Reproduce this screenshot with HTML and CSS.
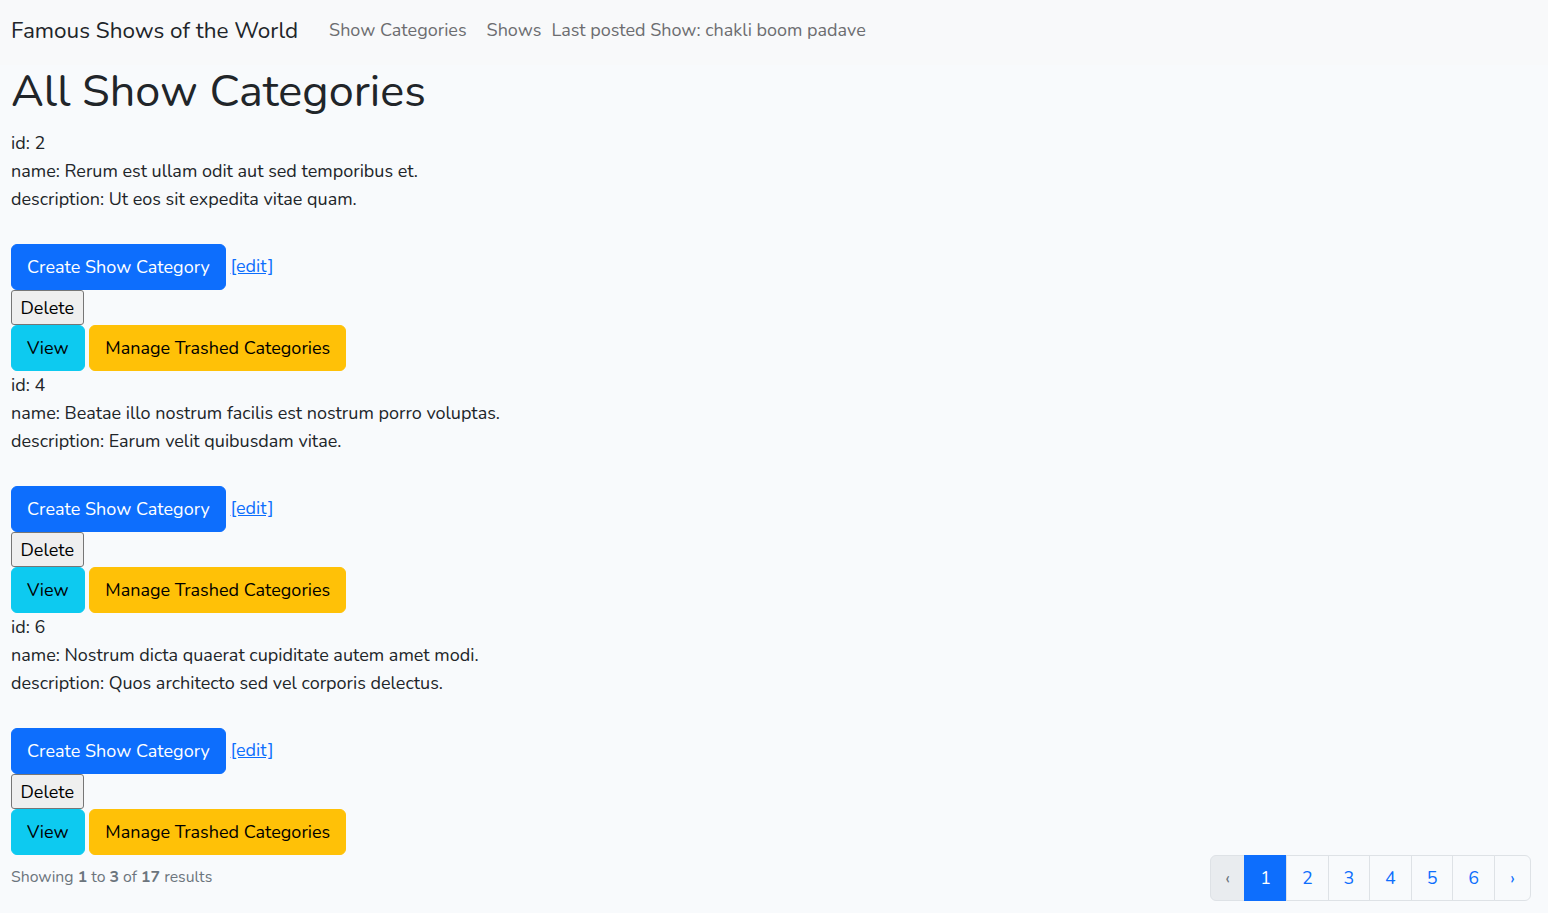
FILE: index.html
```html
<!DOCTYPE html>
<html>
<head>
<meta charset="utf-8">
<link rel="stylesheet" href="styles.css">
</head>
<body>
<nav class="navbar">
  <a class="brand" href="#">Famous Shows of the World</a>
  <a class="nav-link" href="#">Show Categories</a>
  <a class="nav-link" href="#">Shows</a>
  <span class="nav-text">Last posted Show: chakli boom padave</span>
</nav>
<main class="container">
  <h1 class="title">All Show Categories</h1>

  <div class="record">
    <div class="line">id: 2</div>
    <div class="line">name: Rerum est ullam odit aut sed temporibus et.</div>
    <div class="line">description: Ut eos sit expedita vitae quam.</div>
    <div class="actions first"><a class="btn btn-primary" href="#">Create Show Category</a> <a class="edit" href="#">[edit]</a></div>
    <form class="del-form"><button type="button" class="del">Delete</button></form>
    <div class="actions"><a class="btn btn-info" href="#">View</a> <a class="btn btn-warning" href="#">Manage Trashed Categories</a></div>
  </div>

  <div class="record">
    <div class="line">id: 4</div>
    <div class="line">name: Beatae illo nostrum facilis est nostrum porro voluptas.</div>
    <div class="line">description: Earum velit quibusdam vitae.</div>
    <div class="actions first"><a class="btn btn-primary" href="#">Create Show Category</a> <a class="edit" href="#">[edit]</a></div>
    <form class="del-form"><button type="button" class="del">Delete</button></form>
    <div class="actions"><a class="btn btn-info" href="#">View</a> <a class="btn btn-warning" href="#">Manage Trashed Categories</a></div>
  </div>

  <div class="record">
    <div class="line">id: 6</div>
    <div class="line">name: Nostrum dicta quaerat cupiditate autem amet modi.</div>
    <div class="line">description: Quos architecto sed vel corporis delectus.</div>
    <div class="actions first"><a class="btn btn-primary" href="#">Create Show Category</a> <a class="edit" href="#">[edit]</a></div>
    <form class="del-form"><button type="button" class="del">Delete</button></form>
    <div class="actions"><a class="btn btn-info" href="#">View</a> <a class="btn btn-warning" href="#">Manage Trashed Categories</a></div>
  </div>

  <div class="pager-row">
    <p class="summary">Showing <b>1</b> to <b>3</b> of <b>17</b> results</p>
    <ul class="pagination">
      <li class="page disabled"><span>&lsaquo;</span></li>
      <li class="page active"><span>1</span></li>
      <li class="page"><a href="#">2</a></li>
      <li class="page"><a href="#">3</a></li>
      <li class="page"><a href="#">4</a></li>
      <li class="page"><a href="#">5</a></li>
      <li class="page"><a href="#">6</a></li>
      <li class="page next"><a href="#">&rsaquo;</a></li>
    </ul>
  </div>
</main>
</body>
</html>
```

FILE: styles.css
```css
* { box-sizing: border-box; }
html, body { margin: 0; padding: 0; }
body {
  background: #f8fafc;
  color: #212529;
  font-family: "Nunito", "Lato", "Noto Sans", sans-serif;
  font-size: 18px;
  line-height: 28px;
}
.navbar {
  display: flex;
  align-items: center;
  height: 65px;
  padding: 0 10px 5px 11px;
  background: #f8f9fa;
}
.brand {
  color: #212529;
  text-decoration: none;
  font-size: 22.5px;
  line-height: 33px;
  margin-right: 21px;
}
.nav-link {
  color: #6c6d70;
  text-decoration: none;
  padding: 0 10px;
}
.nav-text {
  color: #6c6d70;
}
.container {
  padding: 0 17px 0 11px;
}
.title {
  font-size: 45px;
  font-weight: 400;
  line-height: 53px;
  margin: 0 0 11px 0;
}
.line { height: 28px; }
.actions {
  height: 46px;
  line-height: 28px;
}
.actions.first { margin-top: 31px; }
.btn {
  display: inline-block;
  padding: 8px 15px;
  border: 1px solid transparent;
  border-radius: 6px;
  text-decoration: none;
  line-height: 28px;
  vertical-align: top;
}
.btn-primary { background: #0d6efd; border-color: #0d6efd; color: #fff; }
.btn-info { background: #0dcaf0; border-color: #0dcaf0; color: #000; }
.btn-warning { background: #ffc107; border-color: #ffc107; color: #000; }
.edit {
  color: #0d6efd;
  text-decoration: underline;
  vertical-align: top;
  line-height: 44px;
}
.del-form { margin: 0; height: 35px; }
.del {
  font: inherit;
  line-height: 28px;
  color: #000;
  background: #efefef;
  border: 1px solid #767676;
  border-radius: 3px;
  padding: 3px 8.5px 2px;
  height: 35px;
}
.pager-row {
  display: flex;
  justify-content: space-between;
  align-items: center;
}
.summary {
  margin: 0 0 2px 0;
  font-size: 15.8px;
  color: #6c757d;
  line-height: 28px;
}
.summary b { font-weight: 700; color: #6c757d; }
.pagination {
  display: flex;
  list-style: none;
  margin: 0;
  padding: 0;
}
.page span, .page a {
  display: block;
  padding: 8px 0;
  border: 1px solid #dee2e6;
  margin-left: -1px;
  color: #0d6efd;
  text-decoration: none;
  background: #f8fafc;
  line-height: 28px;
  width: 42.6px;
  text-align: center;
}
.page.disabled span {
  background: #e9ecef;
  color: #6c757d;
  border-radius: 6px 0 0 6px;
  margin-left: 0;
  width: 35px;
}
.page.active span {
  background: #0d6efd;
  border-color: #0d6efd;
  color: #fff;
  width: 43px;
}
.page.next a {
  border-radius: 0 6px 6px 0;
  width: 37px;
}
```
